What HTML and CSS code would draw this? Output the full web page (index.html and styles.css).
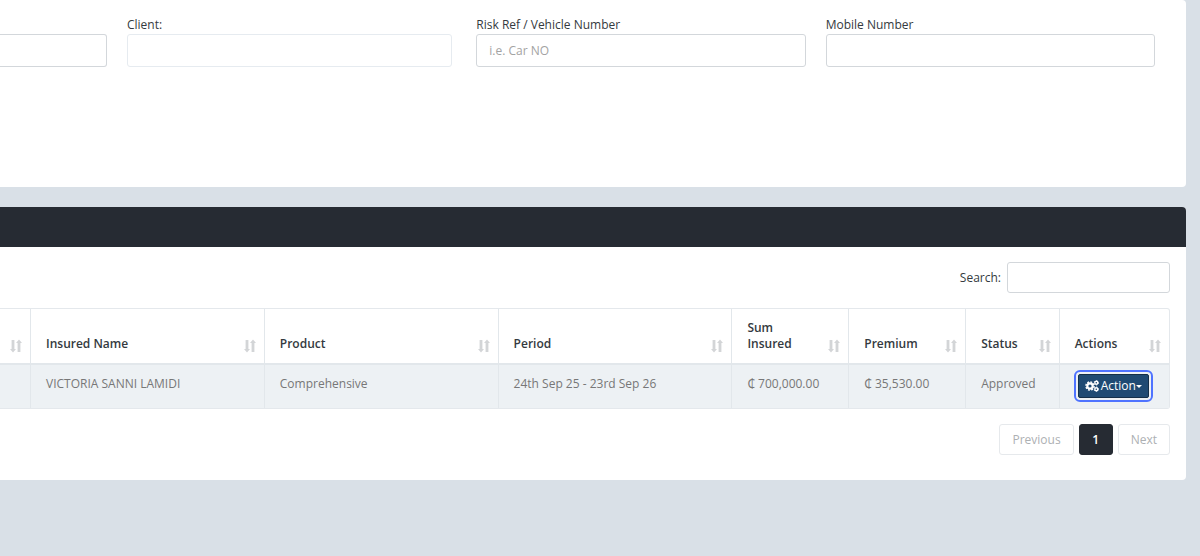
FILE: index.html
```html
<!DOCTYPE html>
<html lang="en">
<head>
    <meta charset="UTF-8">
    <meta name="viewport" content="width=device-width, initial-scale=1.0">
    <title>Policies</title>
    <link rel="stylesheet" href="styles.css">
</head>
<body>

    <!-- Shared icons -->
    <svg class="sprite" aria-hidden="true">
        <symbol id="sort" viewBox="0 0 12 14">
            <path d="M1.6 1h2.8v9h1.6l-3 3.4-3-3.4h1.6zM7.6 13h2.8V4h1.6L9 .6 6 4h1.6z"/>
        </symbol>
        <symbol id="cogs" viewBox="0 0 14 12">
            <circle cx="5" cy="6" r="2.7" fill="none" stroke="currentColor" stroke-width="2.2"/>
            <circle cx="5" cy="6" r="4.1" fill="none" stroke="currentColor" stroke-width="1.4" stroke-dasharray="1.9 1.3"/>
            <circle cx="11.3" cy="2.8" r="1.5" fill="none" stroke="currentColor" stroke-width="1.4"/>
            <circle cx="11.3" cy="2.8" r="2.3" fill="none" stroke="currentColor" stroke-width="0.8" stroke-dasharray="1.2 1.2"/>
            <circle cx="11.3" cy="9.2" r="1.5" fill="none" stroke="currentColor" stroke-width="1.4"/>
            <circle cx="11.3" cy="9.2" r="2.3" fill="none" stroke="currentColor" stroke-width="0.8" stroke-dasharray="1.2 1.2"/>
        </symbol>
    </svg>

    <section class="panel">
        <form class="filters">
            <div class="form-group">
                <input type="text" class="form-control cut" aria-label="Reference">
            </div>
            <div class="form-group">
                <label for="client">Client:</label>
                <input type="text" id="client" class="form-control light">
            </div>
            <div class="form-group">
                <label for="risk">Risk Ref / Vehicle Number</label>
                <input type="text" id="risk" class="form-control" placeholder="i.e. Car NO">
            </div>
            <div class="form-group">
                <label for="mobile">Mobile Number</label>
                <input type="text" id="mobile" class="form-control">
            </div>
        </form>
    </section>

    <section class="panel">
        <div class="panel-heading"></div>
        <div class="panel-body">
            <div class="search">
                <label for="search">Search:</label>
                <input type="search" id="search">
            </div>

            <table>
                <colgroup>
                    <col class="col-first">
                    <col class="col-wide">
                    <col class="col-wide">
                    <col class="col-wide">
                    <col class="col-amount">
                    <col class="col-amount">
                    <col class="col-status">
                    <col>
                </colgroup>
                <thead>
                    <tr>
                        <th><div class="head"><span></span><svg><use href="#sort"/></svg></div></th>
                        <th><div class="head"><span>Insured Name</span><svg><use href="#sort"/></svg></div></th>
                        <th><div class="head"><span>Product</span><svg><use href="#sort"/></svg></div></th>
                        <th><div class="head"><span>Period</span><svg><use href="#sort"/></svg></div></th>
                        <th><div class="head"><span>Sum<br>Insured</span><svg><use href="#sort"/></svg></div></th>
                        <th><div class="head"><span>Premium</span><svg><use href="#sort"/></svg></div></th>
                        <th><div class="head"><span>Status</span><svg><use href="#sort"/></svg></div></th>
                        <th><div class="head"><span>Actions</span><svg><use href="#sort"/></svg></div></th>
                    </tr>
                </thead>
                <tbody>
                    <tr>
                        <td></td>
                        <td>VICTORIA SANNI LAMIDI</td>
                        <td>Comprehensive</td>
                        <td>24th Sep 25 - 23rd Sep 26</td>
                        <td>₵ 700,000.00</td>
                        <td>₵ 35,530.00</td>
                        <td>Approved</td>
                        <td class="actions">
                            <button type="button" class="btn-action"><svg><use href="#cogs"/></svg>Action<i class="caret"></i></button>
                        </td>
                    </tr>
                </tbody>
            </table>

            <nav class="pagination" aria-label="Pages">
                <button type="button" class="muted">Previous</button>
                <button type="button" class="current">1</button>
                <button type="button" class="muted">Next</button>
            </nav>
        </div>
    </section>

</body>
</html>
```

FILE: styles.css
```css
* {
    box-sizing: border-box;
}

body {
    margin: 0;
    padding-right: 14px;
    background-color: #d9e0e7;
    color: #343a40;
    font-family: "Open Sans", "Noto Sans", sans-serif;
    font-size: 12px;
    line-height: 16px;
}

input,
button {
    font: inherit;
}

.sprite {
    position: absolute;
    width: 0;
    height: 0;
}

.panel {
    margin-bottom: 20px;
    background-color: #fff;
    border-radius: 0 4px 4px 0;
    overflow: hidden;
}

.filters {
    display: grid;
    grid-template-columns: 107px 1fr 1fr 1fr;
    gap: 20px;
    padding: 17px 31px 120px 0;
}

.form-group {
    display: flex;
    flex-direction: column;
    justify-content: flex-end;
    gap: 1px;
}

.form-control {
    width: 100%;
    height: 33px;
    padding: 0 12px;
    border: 1px solid #d3d7db;
    border-radius: 3px;
    background-color: #fff;
    color: #555;
}

.form-control::placeholder {
    color: #a3a3a3;
    opacity: 1;
}

.form-control.cut {
    border-left: none;
    border-radius: 0 3px 3px 0;
}

.form-control.light {
    width: calc(100% - 4px);
    border-color: #e6ebf0;
}

.panel-heading {
    height: 40px;
    background-color: #262b33;
}

.panel-body {
    padding: 15px 16px 25px 0;
}

.search {
    display: flex;
    justify-content: flex-end;
    align-items: center;
    gap: 6px;
    margin-bottom: 15px;
}

.search input {
    width: 163px;
    height: 31px;
    padding: 0 10px;
    border: 1px solid #d3d7db;
    border-radius: 3px;
}

table {
    width: 100%;
    table-layout: fixed;
    border-spacing: 0;
    border: 1px solid #e4e8ec;
    border-left: none;
    border-radius: 0 3px 3px 0;
}

.col-first {
    width: 31px;
}

.col-wide {
    width: 20%;
}

.col-amount {
    width: 10%;
}

.col-status {
    width: 8%;
}

th,
td {
    border-right: 1px solid #e2e7eb;
    text-align: left;
}

th:last-child,
td:last-child {
    border-right: none;
}

th {
    padding: 10px 8px 10px 15px;
    border-bottom: 2px solid #e2e7eb;
    vertical-align: bottom;
    font-weight: 600;
}

th:first-child {
    padding-left: 0;
}

.head {
    display: flex;
    justify-content: space-between;
    align-items: flex-end;
}

.head span {
    padding: 1px 0;
}

.head svg {
    width: 12px;
    height: 14px;
    fill: #d3d5d7;
}

td {
    height: 43px;
    padding: 11px 0 11px 15px;
    background-color: #edf1f4;
    color: #777;
    vertical-align: top;
    white-space: nowrap;
}

td.actions {
    padding: 9px 0 0 18px;
}

.btn-action {
    display: flex;
    align-items: center;
    height: 24px;
    padding: 0 6px;
    border: 1px solid #142f49;
    border-radius: 2px;
    background-color: #1f4a73;
    color: #fff;
    outline: 2px solid #4f73ff;
    outline-offset: 2px;
}

.btn-action svg {
    width: 14px;
    height: 12px;
    margin-right: 2px;
}

.caret {
    border: 3px solid transparent;
    border-top-color: #fff;
    border-bottom: none;
}

.pagination {
    display: flex;
    justify-content: flex-end;
    gap: 5px;
    margin-top: 15px;
}

.pagination button {
    height: 31px;
    padding: 0 12px;
    border: 1px solid #e6e9ec;
    border-radius: 3px;
    background-color: #fff;
}

.pagination .muted {
    color: #adb0b3;
}

.pagination .current {
    width: 34px;
    border-color: #262b33;
    background-color: #262b33;
    color: #fff;
    font-weight: 600;
}
```
